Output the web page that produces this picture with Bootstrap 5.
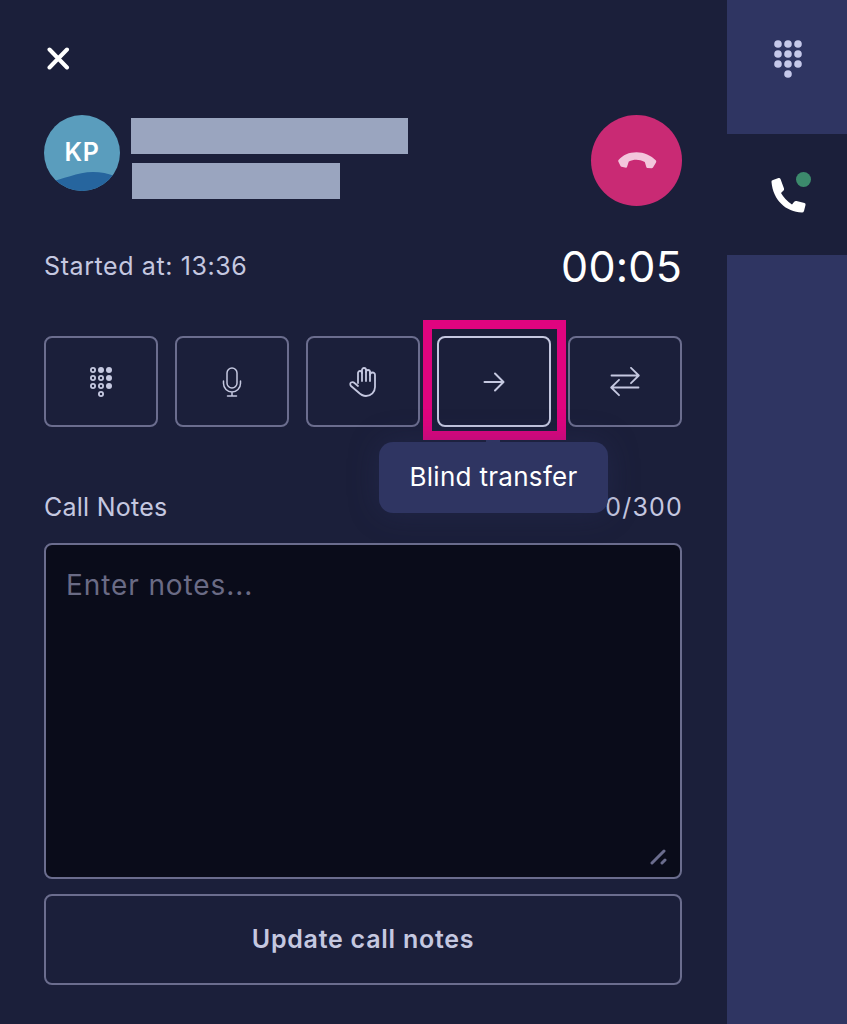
<!DOCTYPE html>
<html lang="en">

<head>
    <meta charset="UTF-8">
    <meta name="viewport" content="width=device-width, initial-scale=1.0">
    <title>Call panel</title>
    <link href="https://cdn.jsdelivr.net/npm/bootstrap@5.3.3/dist/css/bootstrap.min.css" rel="stylesheet">
    <style>
        body {
            background: #1b1f3a;
            font-family: Inter, "Liberation Sans", sans-serif;
            color: #c5c8e0;
            overflow: hidden;
        }

        .app-shell { height: 1024px; }

        /* main call panel */
        .call-panel {
            width: 727px;
            padding: 47px 45px 0 44px;
            position: relative;
        }

        .close-btn { height: 23px; padding-left: 2px; line-height: 0; color: #fff; }
        .caller-row { margin-top: 45px; height: 92px; }

        .avatar {
            width: 76px;
            height: 76px;
            border-radius: 50%;
            background: #5a9dbd;
            color: #fff;
            font-size: 25px;
            font-weight: 600;
            letter-spacing: .6px;
            overflow: hidden;
            position: relative;
        }

        .avatar span { position: relative; top: 0; z-index: 1; }
        .avatar svg { position: absolute; left: 0; bottom: 0; }

        .redacted { background: #9aa5bf; height: 36px; }
        .redacted-name { width: 277px; margin: 3px 0 9px 11px; }
        .redacted-number { width: 208px; margin-left: 12px; }

        .hangup {
            width: 91px;
            height: 91px;
            padding: 0;
            background: #c92a74;
            border: 0;
            border-radius: 50%;
        }

        .time-row { margin-top: 30px; height: 60px; }
        .started-at { font-size: 25px; letter-spacing: .6px; }
        .timer { font-size: 43px; line-height: 58px; letter-spacing: .2px; height: 60px; color: #fff; }

        .action-row { margin-top: 39px; gap: 17px; }

        .action-btn {
            width: 114px;
            height: 91px;
            padding: 0;
            border: 2px solid #6b6d8e;
            border-radius: 8px;
            background: transparent;
            color: #c5c8e0;
        }

        .action-btn.is-focused { border-color: #c5c8e0; }

        .notes-head { margin-top: 63px; font-size: 25px; line-height: 34px; letter-spacing: .25px; }
        .notes-count { letter-spacing: 1.200px; margin-right: -1px; }

        .notes-box {
            display: block;
            width: 100%;
            height: 336px;
            margin-top: 19px;
            padding: 22px 20px;
            background: #0a0c1a;
            border: 2px solid #6b6d8e;
            border-radius: 8px;
            color: #c5c8e0;
            font-size: 28px;
            letter-spacing: .9px;
            line-height: 36px;
            resize: none;
            outline: 0;
        }

        .notes-box::placeholder { color: #6a6b85; opacity: 1; }

        .notes-wrap { position: relative; }
        .grip { position: absolute; right: 14px; bottom: 14px; }

        .update-btn {
            width: 100%;
            height: 91px;
            margin-top: 15px;
            background: transparent;
            border: 2px solid #6b6d8e;
            border-radius: 8px;
            color: #c5c8e0;
            font-size: 25px;
            font-weight: 600;
            letter-spacing: .75px;
        }

        /* annotation and tooltip lie over the content */
        .focus-mark {
            position: absolute;
            left: 423px;
            top: 320px;
            width: 143px;
            height: 120px;
            border: 9px solid #e0047f;
        }

        .tip-bubble {
            position: absolute;
            left: 379px;
            top: 442px;
            width: 229px;
            height: 71px;
            padding-bottom: 2px;
            background: #2f3562;
            border-radius: 14px;
            color: #fff;
            font-size: 26px;
            letter-spacing: .3px;
            box-shadow: 0 0 30px rgba(47, 53, 98, .35);
        }

        .tip-bubble::before {
            content: "";
            position: absolute;
            left: 107px;
            top: -2px;
            width: 14px;
            height: 2px;
            background: #2f3562;
        }

        /* right rail */
        .side-rail { width: 120px; background: #2f3562; }
        .rail-item { height: 134px; padding-top: 40px; }
        .rail-dial { margin-left: 2px; }
        .rail-item.is-active { height: 121px; background: #1b1f3a; padding-top: 42px; position: relative; }
        .rail-phone { margin-left: 2px; }
        .live-dot {
            position: absolute;
            left: 69px;
            top: 38px;
            width: 15px;
            height: 15px;
            border-radius: 50%;
            background: #3c8a6c;
        }
    </style>
</head>

<body>

    <div class="app-shell d-flex">

        <!-- Call panel -->
        <div class="call-panel">
            <div class="close-btn">
                <svg width="24" height="23" viewBox="0 0 24 23" fill="none" stroke="#fff" stroke-width="4" stroke-linecap="round">
                    <path d="M3.500 2.500 21 20.500M21 2.500 3.500 20.500" />
                </svg>
            </div>

            <div class="caller-row d-flex align-items-start">
                <div class="avatar d-flex align-items-center justify-content-center">
                    <span>KP</span>
                    <svg width="76" height="20" viewBox="0 0 76 20">
                        <path d="M0 12C16 10 32 1 49 1 58 1 66 3 76 7V20H0Z" fill="#26659e" />
                    </svg>
                </div>
                <div class="flex-grow-1">
                    <div class="redacted redacted-name"></div>
                    <div class="redacted redacted-number"></div>
                </div>
                <button class="hangup d-flex align-items-center justify-content-center" type="button">
                    <svg width="40" height="19" viewBox="6 6 40 19" fill="#f3c6dc">
                        <path d="M7.500 15C12 10 18 7.300 25.500 7.300S40 10.500 45 15.500Q45.500 16.500 45 17.500L42 22.500Q41.500 23.300 40.500 23.200L36.500 23Q35.500 22.800 35.300 22L33.800 17C28 14 23 14 17.800 16.500L16 22Q15.800 22.700 15 22.700L10.500 21.800Q9.800 21.600 9.500 21L7.300 16.500Q7 15.700 7.500 15Z" />
                    </svg>
                </button>
            </div>

            <div class="time-row d-flex justify-content-between align-items-center">
                <div class="started-at">Started at: 13:36</div>
                <div class="timer">00:05</div>
            </div>

            <div class="action-row d-flex">
                <button class="action-btn d-flex align-items-center justify-content-center" type="button">
                    <svg width="24" height="32" viewBox="0 0 24 32" fill="#c5c8e0">
                        <circle cx="4" cy="4" r="3" />
                        <circle cx="12" cy="4" r="3" />
                        <circle cx="20" cy="4" r="3" />
                        <circle cx="4" cy="12" r="3" />
                        <circle cx="12" cy="12" r="3" />
                        <circle cx="20" cy="12" r="3" />
                        <circle cx="4" cy="20" r="3" />
                        <circle cx="12" cy="20" r="3" />
                        <circle cx="20" cy="20" r="3" />
                        <circle cx="12" cy="28" r="3" />
                        <!-- hollow keys -->
                        <g fill="#1b1f3a">
                            <circle cx="4" cy="4" r="1.200" />
                            <circle cx="4" cy="12" r="1.200" />
                            <circle cx="12" cy="12" r="1.200" />
                            <circle cx="4" cy="20" r="1.200" />
                            <circle cx="12" cy="20" r="1.200" />
                            <circle cx="12" cy="28" r="1.200" />
                        </g>
                    </svg>
                </button>
                <button class="action-btn d-flex align-items-center justify-content-center" type="button">
                    <svg width="20" height="30" viewBox="0 0 20 30" fill="none" stroke="#c5c8e0" stroke-width="1.500" stroke-linecap="round">
                        <rect x="5" y="1" width="10" height="20" rx="5" />
                        <path d="M1.500 14v2.500a8.500 8.500 0 0 0 17 0V14M10 25v4M5.500 29h9" />
                    </svg>
                </button>
                <button class="action-btn d-flex align-items-center justify-content-center" type="button">
                    <svg width="28" height="30" viewBox="0 0 28 30" fill="none" stroke="#c5c8e0" stroke-width="1.800" stroke-linecap="round" stroke-linejoin="round">
                        <path d="M9 16V6a2 2 0 0 1 4 0V3a2 2 0 0 1 4 0v2a2 2 0 0 1 4 0v3a2 2 0 0 1 5 0v12c0 5-4 9-9 9-4 0-6-2-8-4l-7-6c-1-1-1-3 0-3.500s2.500-.5 3.500.5L9 19" />
                        <path d="M13 6v8M17 5v9M21 5v9" />
                    </svg>
                </button>
                <button class="action-btn is-focused d-flex align-items-center justify-content-center" type="button">
                    <svg width="22" height="20" viewBox="0 0 22 20" fill="none" stroke="#c5c8e0" stroke-width="2" stroke-linecap="round" stroke-linejoin="round">
                        <path d="M1.500 10h18.500M12 1.500 20.500 10 12 18.500" />
                    </svg>
                </button>
                <button class="action-btn d-flex align-items-center justify-content-center" type="button">
                    <svg width="30" height="30" viewBox="0 0 30 30" fill="none" stroke="#c5c8e0" stroke-width="1.800" stroke-linecap="round" stroke-linejoin="round">
                        <path d="M1.500 8.500h27M21 .8 28.800 8.500 21 16.200M28.500 20.500h-27M9 12.800 1.200 20.500 9 28.200" />
                    </svg>
                </button>
            </div>

            <div class="notes-head d-flex justify-content-between">
                <span>Call Notes</span>
                <span class="notes-count">0/300</span>
            </div>

            <div class="notes-wrap">
                <textarea class="notes-box" placeholder="Enter notes..."></textarea>
                <svg class="grip" width="18" height="16" viewBox="0 0 18 16" fill="none" stroke="#6b6d8e" stroke-width="3" stroke-linecap="round">
                    <path d="M2 14 14 2M12 14l3-3" />
                </svg>
            </div>

            <button class="update-btn" type="button">Update call notes</button>

            <div class="focus-mark"></div>
            <div class="tip-bubble d-flex align-items-center justify-content-center">Blind transfer</div>
        </div>

        <!-- Right rail -->
        <div class="side-rail">
            <div class="rail-item d-flex justify-content-center align-items-start">
                <svg class="rail-dial" width="30" height="38" viewBox="0 0 30 38" fill="#c5c8ea">
                    <circle cx="5" cy="4" r="3.800" />
                    <circle cx="15" cy="4" r="3.800" />
                    <circle cx="25" cy="4" r="3.800" />
                    <circle cx="5" cy="14" r="3.800" />
                    <circle cx="15" cy="14" r="3.800" />
                    <circle cx="25" cy="14" r="3.800" />
                    <circle cx="5" cy="24" r="3.800" />
                    <circle cx="15" cy="24" r="3.800" />
                    <circle cx="25" cy="24" r="3.800" />
                    <circle cx="15" cy="34" r="3.800" />
                </svg>
            </div>
            <div class="rail-item is-active d-flex justify-content-center align-items-start">
                <svg class="rail-phone" width="38" height="38" viewBox="8 8 38 38" fill="#fff">
                    <path d="M10.500 14Q10 12.500 12 12L17.500 10Q19 9.700 19.500 11L23 20.500Q23.500 22 22 23L20 25Q24 32 31 36.500L33 34Q34 32.700 35.500 33L43.500 35Q45 35.500 44.500 37L43 43Q42.500 44.500 41 44.500C25 44 12 32 10.500 14Z" />
                </svg>
                <span class="live-dot"></span>
            </div>
        </div>

    </div>

    <script src="https://cdn.jsdelivr.net/npm/bootstrap@5.3.3/dist/js/bootstrap.bundle.min.js"></script>

</body>

</html>
